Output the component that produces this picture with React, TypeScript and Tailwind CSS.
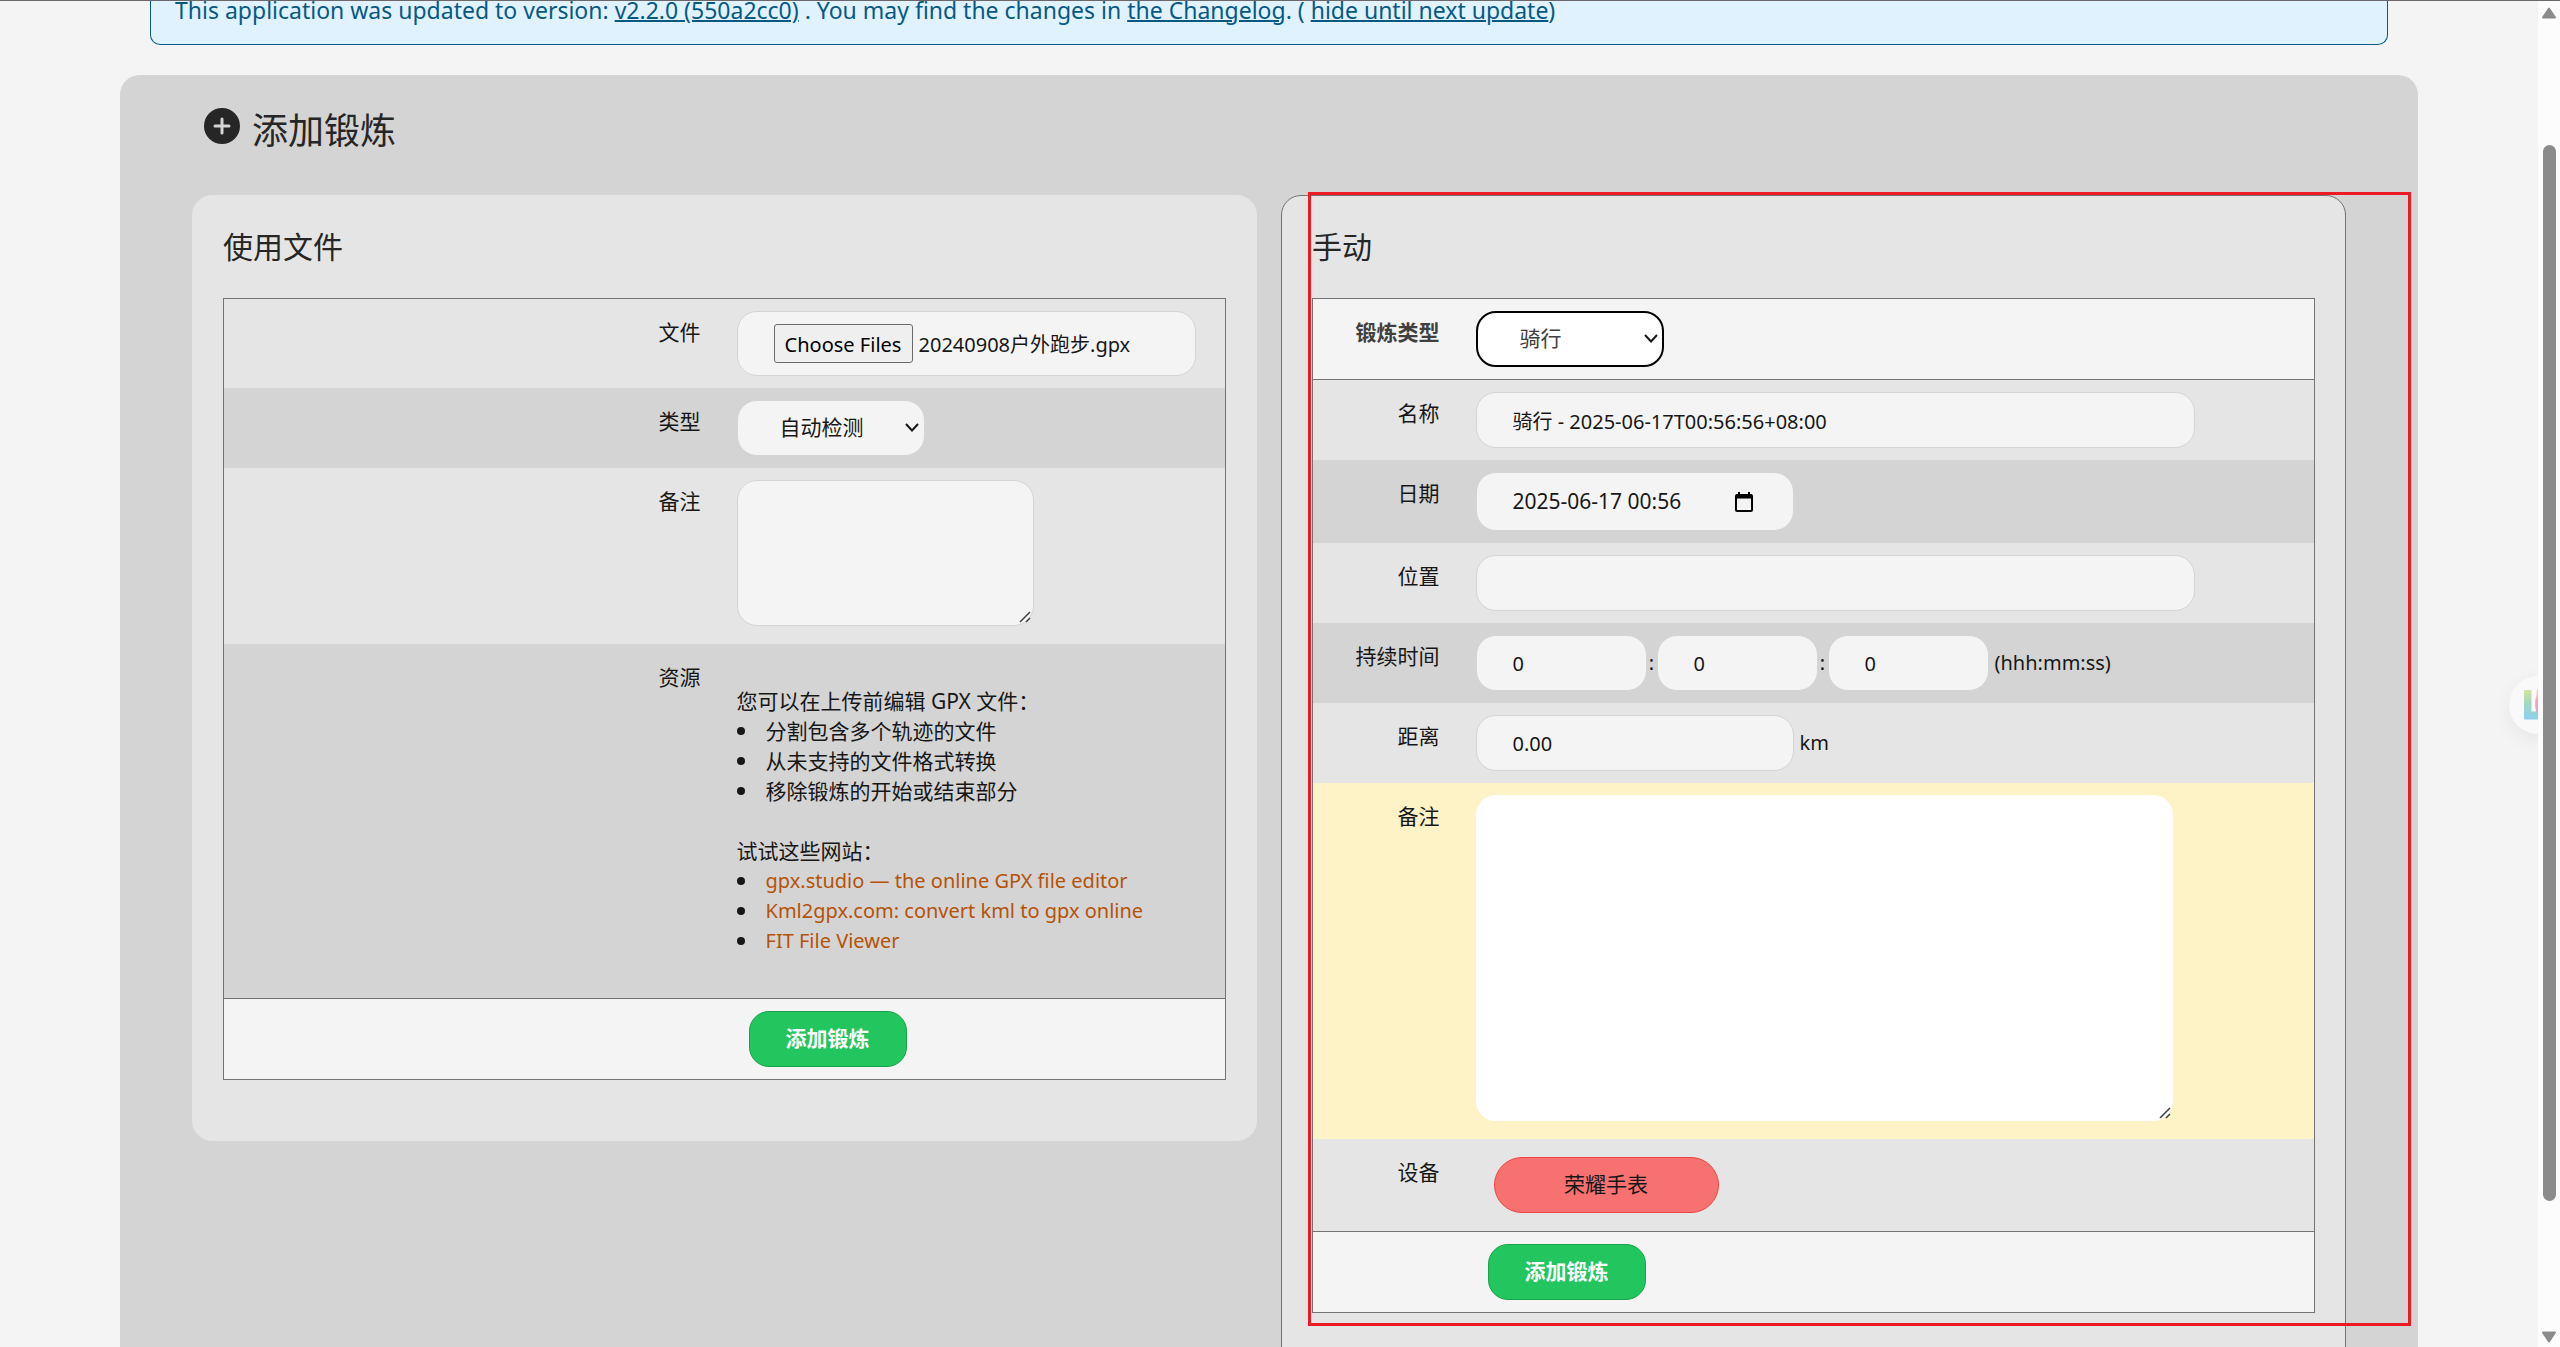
import { useState } from "react";
import type { ComponentProps, ReactNode } from "react";
import clsx from "clsx";

const field =
  "h-14 rounded-[20px] border border-[#d4d4d4] bg-[#f4f4f4] px-9 text-[20px] text-[#171717] outline-none";

const sites = [
  { name: "gpx.studio — the online GPX file editor", href: "https://gpx.studio" },
  { name: "Kml2gpx.com: convert kml to gpx online", href: "https://kml2gpx.com" },
  { name: "FIT File Viewer", href: "https://www.fitfileviewer.com" },
];

const tips = ["分割包含多个轨迹的文件", "从未支持的文件格式转换", "移除锻炼的开始或结束部分"];

const bullet =
  "flex items-center gap-[21px] before:size-2 before:shrink-0 before:rounded-full before:bg-[#171717]";

function Row({
  label,
  htmlFor,
  color,
  className = "pb-3",
  children,
}: {
  label: string;
  htmlFor?: string;
  color: string;
  className?: string;
  children: ReactNode;
}) {
  return (
    <tr className={color}>
      <th scope="row" className="pt-[18px] pr-6 text-right align-top text-[21px] leading-[30px] font-normal">
        <label htmlFor={htmlFor}>{label}</label>
      </th>
      <td className={clsx("px-3 pt-3 align-top", className)}>{children}</td>
    </tr>
  );
}

function Select({ className, ...props }: ComponentProps<"select">) {
  return (
    <div className="relative w-[188px]">
      <select
        {...props}
        className={clsx("block h-14 w-full appearance-none rounded-[20px] pl-[42px] text-[21px] outline-none", className)}
      />
      <svg viewBox="0 0 14 9" className="pointer-events-none absolute top-[23px] right-1.5 h-[9px] w-3.5" fill="none">
        <path d="M1 1l6 6.500L13 1" stroke="#171717" strokeWidth="2" />
      </svg>
    </div>
  );
}

function TextArea({ className, ...props }: ComponentProps<"textarea">) {
  return (
    <div className={clsx("relative", className)}>
      <textarea {...props} className="block size-full resize-none rounded-[20px] p-3 outline-none" />
      <svg viewBox="0 0 12 12" className="pointer-events-none absolute right-0.5 bottom-0.5 size-3" fill="none">
        <path d="M1 11L11 1M7 11l4-4" stroke="#404040" strokeWidth="1.500" />
      </svg>
    </div>
  );
}

function SubmitRow() {
  return (
    <tfoot>
      <tr className="border-t border-[#737373] bg-[#f4f4f4]">
        <td></td>
        <td className="p-3">
          <button
            type="submit"
            className="ml-3 block h-14 rounded-[20px] border border-[#16a34a] bg-[#22c55e] px-9 text-[21px] font-bold text-white"
          >
            添加锻炼
          </button>
        </td>
      </tr>
    </tfoot>
  );
}

function FileForm() {
  return (
    <form
      onSubmit={(e) => e.preventDefault()}
      className="rounded-[20px] border border-[#e5e5e5] bg-[#e5e5e5] px-[30px] pb-[60px]"
    >
      <h2 className="pt-[31px] pb-[31px] text-[30px] leading-10 text-[#262626]">使用文件</h2>
      <table className="w-full table-fixed border border-[#737373]">
        <colgroup>
          <col className="w-1/2" />
          <col />
        </colgroup>
        <tbody>
          <Row label="文件" htmlFor="file" color="bg-[#e5e5e5]">
            <div className="flex h-[65px] w-[459px] items-center gap-1.5 rounded-[20px] border border-[#d4d4d4] bg-[#f4f4f4] px-9 text-[20px]">
              <input id="file" type="file" multiple className="sr-only" />
              <button
                type="button"
                onClick={() => document.getElementById("file")?.click()}
                className="h-[39px] w-[139px] shrink-0 rounded-[3px] border border-[#6b6b6b] bg-[#efefef] pt-0.5 text-black"
              >
                Choose Files
              </button>
              <span className="pt-0.5 whitespace-nowrap">20240908户外跑步.gpx</span>
            </div>
          </Row>
          <Row label="类型" htmlFor="type" color="bg-[#d4d4d4]">
            <Select id="type" className="border border-[#d4d4d4] bg-[#f4f4f4] text-[#171717]">
              <option>自动检测</option>
            </Select>
          </Row>
          <Row label="备注" htmlFor="file-notes" color="bg-[#e5e5e5]" className="pb-[18px]">
            <TextArea
              id="file-notes"
              className="h-[146px] w-[297px] rounded-[20px] border border-[#d4d4d4] bg-[#f4f4f4]"
            />
          </Row>
          <Row label="资源" color="bg-[#d4d4d4]" className="pb-[42px]">
            <div className="pt-[30px] text-[21px] leading-[30px]">
              <p>您可以在上传前编辑 GPX 文件：</p>
              <ul>
                {tips.map((tip) => (
                  <li key={tip} className={bullet}>{tip}</li>
                ))}
              </ul>
              <p className="mt-[30px]">试试这些网站：</p>
              <ul className="text-[20px]">
                {sites.map((site) => (
                  <li key={site.name} className={bullet}>
                    <a href={site.href} className="text-[#b45309]">
                      {site.name}
                    </a>
                  </li>
                ))}
              </ul>
            </div>
          </Row>
        </tbody>
        <SubmitRow />
      </table>
    </form>
  );
}

function CalendarIcon() {
  return (
    <svg viewBox="0 0 18 20" className="h-5 w-[18px]" fill="none">
      <path d="M2 3h14a1 1 0 0 1 1 1v14a1 1 0 0 1-1 1H2a1 1 0 0 1-1-1V4a1 1 0 0 1 1-1z" stroke="#000" strokeWidth="2" />
      <path d="M1 3h16v3.500H1zM3 0h2v3H3zM13 0h2v3h-2z" fill="#000" />
    </svg>
  );
}

function ManualForm() {
  const [name, setName] = useState("骑行 - 2025-06-17T00:56:56+08:00");
  const [date, setDate] = useState("2025-06-17 00:56");
  const [place, setPlace] = useState("");

  return (
    <form
      onSubmit={(e) => e.preventDefault()}
      className="rounded-[20px] border border-[#737373] bg-[#e5e5e5] px-[30px] pb-[60px]"
    >
      <div className="relative">
        <h2 className="pt-[31px] pb-[31px] text-[30px] leading-10 text-[#262626]">手动</h2>
        <table className="w-full table-fixed border border-[#737373]">
          <colgroup>
            <col className="w-[151px]" />
            <col />
          </colgroup>
          <thead>
            <tr className="border-b border-[#737373] bg-[#f4f4f4] text-[#404040]">
              <th scope="row" className="pt-[18px] pr-6 text-right align-top text-[21px] leading-[30px] font-bold">
                <label htmlFor="workout-type">锻炼类型</label>
              </th>
              <td className="p-3">
                <Select id="workout-type" className="border-2 border-black bg-white text-[#404040]">
                  <option>骑行</option>
                </Select>
              </td>
            </tr>
          </thead>
          <tbody>
            <Row label="名称" htmlFor="name" color="bg-[#e5e5e5]">
              <input
                id="name"
                value={name}
                onChange={(e) => setName(e.target.value)}
                className={clsx(field, "block w-[87%]")}
              />
            </Row>
            <Row label="日期" htmlFor="date" color="bg-[#d4d4d4]">
              <div className="flex h-[59px] w-[318px] items-center rounded-[20px] border border-[#d4d4d4] bg-[#f4f4f4] pr-10 pl-9">
                <input
                  id="date"
                  value={date}
                  onChange={(e) => setDate(e.target.value)}
                  className="min-w-0 flex-1 text-[21px] outline-none"
                />
                <button type="button" aria-label="选择日期">
                  <CalendarIcon />
                </button>
              </div>
            </Row>
            <Row label="位置" htmlFor="place" color="bg-[#e5e5e5]">
              <input
                id="place"
                value={place}
                onChange={(e) => setPlace(e.target.value)}
                className={clsx(field, "block w-[87%]")}
              />
            </Row>
            <Row label="持续时间" htmlFor="hours" color="bg-[#d4d4d4]">
              <div className="flex items-center text-[20px]">
                <input id="hours" defaultValue="0" className={clsx(field, "w-[171px]")} />
                <span className="w-[10px] text-center">:</span>
                <input aria-label="分" defaultValue="0" className={clsx(field, "w-[161px]")} />
                <span className="w-[10px] text-center">:</span>
                <input aria-label="秒" defaultValue="0" className={clsx(field, "w-[161px]")} />
                <span className="ml-1.5">(hhh:mm:ss)</span>
              </div>
            </Row>
            <Row label="距离" htmlFor="distance" color="bg-[#e5e5e5]">
              <div className="flex items-center gap-1.5 text-[20px]">
                <input id="distance" defaultValue="0.00" className={clsx(field, "w-[318px]")} />
                <span>km</span>
              </div>
            </Row>
            <Row label="备注" htmlFor="notes" color="bg-[#fef2c7]" className="pb-[18px]">
              <TextArea id="notes" className="h-[326px] w-[697px] rounded-[20px] bg-white" />
            </Row>
            <Row label="设备" color="bg-[#e5e5e5]" className="pb-[18px]">
              <button
                type="button"
                className="mt-1.5 ml-[18px] block h-14 w-[225px] rounded-full border border-[#ef4444] bg-[#f87171] text-[21px]"
              >
                荣耀手表
              </button>
            </Row>
          </tbody>
          <SubmitRow />
        </table>
        {/* highlight frame */}
        <div className="pointer-events-none absolute -top-1 -right-24 -bottom-[13px] -left-1 border-3 border-[#ed1c24]" />
      </div>
    </form>
  );
}

function Scrollbar() {
  return (
    <div className="flex w-[22px] shrink-0 flex-col items-center bg-[#fcfcfc] pt-1.5 pb-1">
      <svg viewBox="0 0 16 12" className="h-3 w-4">
        <path d="M8 1.500 14 10.500H2z" fill="#8b8b8b" stroke="#8b8b8b" strokeWidth="2" strokeLinejoin="round" />
      </svg>
      <div className="flex w-full flex-1 flex-col items-center pt-[126px] pb-[130px]">
        <div className="w-[13px] flex-1 rounded-full bg-[#8b8b8b]" />
      </div>
      <svg viewBox="0 0 16 12" className="h-3 w-4">
        <path d="M8 10.500 14 1.500H2z" fill="#8b8b8b" stroke="#8b8b8b" strokeWidth="2" strokeLinejoin="round" />
      </svg>
    </div>
  );
}

function FloatingLogo() {
  return (
    <button
      type="button"
      aria-label="L"
      className="absolute top-[675px] -right-[29px] size-[58px] rounded-full bg-[#f9f9f9] shadow-[0_6px_20px_rgba(0,0,0,0.06)]"
    >
      <svg viewBox="0 0 58 58" className="size-[58px]">
        <defs>
          <linearGradient id="bar" x1="0" y1="0" x2="0" y2="1">
            <stop offset="0" stopColor="#d3e3a0" />
            <stop offset="0.5" stopColor="#9fd6c4" />
            <stop offset="1" stopColor="#8ecff0" />
          </linearGradient>
          <linearGradient id="drop" x1="0" y1="0" x2="0" y2="1">
            <stop offset="0" stopColor="#fbd29a" />
            <stop offset="0.5" stopColor="#f5a3b8" />
            <stop offset="1" stopColor="#c9a4ec" />
          </linearGradient>
        </defs>
        <path d="M16 14h5.500a1 1 0 0 1 1 1v20.500H29V43.500H16a1 1 0 0 1-1-1V15a1 1 0 0 1 1-1z" fill="url(#bar)" />
        <path d="M29 12c-2 3-1 6-1.500 8-2 4-2 14 1.500 20h10V12z" fill="url(#drop)" />
      </svg>
    </button>
  );
}

export default function App() {
  return (
    <div className="flex h-screen overflow-hidden border-t border-[#6b676b] bg-[#f4f4f4] font-['Noto_Sans','Noto_Sans_CJK_SC',sans-serif] text-[#171717]">
      <main className="relative min-w-0 flex-1 overflow-hidden px-[120px]">
        <div className="mx-[30px] flex h-11 items-end rounded-b-[10px] border-x border-b border-[#075985] bg-[#e0f2fe] px-6 pb-[19px] text-[23px] leading-[30px] text-[#075985]">
          <p>
            This application was updated to version:{" "}
            <a href="#version" className="underline decoration-2">v2.2.0 (550a2cc0)</a> . You may find the changes in{" "}
            <a href="#changelog" className="underline decoration-2">the Changelog</a>. ({" "}
            <a href="#hide" className="underline decoration-2">hide until next update</a>)
          </p>
        </div>

        <section className="mt-[30px] rounded-[20px] bg-[#d4d4d4] px-[72px] pb-20">
          <div className="flex h-[120px] items-start pt-[33px] pl-3">
            <svg viewBox="0 0 36 36" className="size-9">
              <circle cx="18" cy="18" r="18" fill="#262626" />
              <path d="M18 11v14M11 18h14" stroke="#d4d4d4" strokeWidth="3" strokeLinecap="round" />
            </svg>
            <h1 className="ml-3 text-[36px] leading-[46px] text-[#262626]">添加锻炼</h1>
          </div>
          <div className="grid grid-cols-2 items-start gap-6">
            <FileForm />
            <ManualForm />
          </div>
        </section>
        <FloatingLogo />
      </main>
      <Scrollbar />
    </div>
  );
}
